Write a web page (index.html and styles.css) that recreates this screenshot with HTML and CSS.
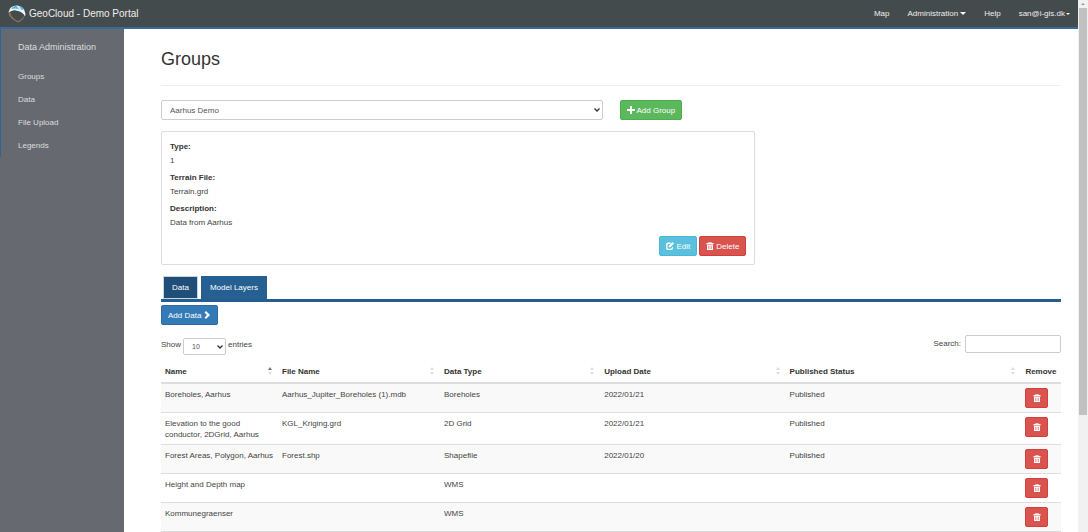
FILE: index.html
```html
<!DOCTYPE html>
<html lang="en">
	<head>
		<meta charset="UTF-8">
		<title>GeoCloud - Demo Portal</title>
		<link rel="stylesheet" href="styles.css">
	</head>
	<body>
		<!-- icons -->
		<svg class="sprite" aria-hidden="true">
			<symbol id="i-trash" viewBox="0 0 16 16"><path fill-rule="evenodd" d="M5 0h6v2h4v3H1V2h4zM6.500 2h3V1.200h-3zM2 6h12v9q0 1-1 1H3q-1 0-1-1zM4.500 7.500v6.500h1V7.500zM7.500 7.500v6.500h1V7.500zM10.500 7.500v6.500h1V7.500z"/></symbol>
			<symbol id="i-plus" viewBox="0 0 16 16"><path d="M6 0h4v6h6v4h-6v6H6v-6H0V6h6z"/></symbol>
			<symbol id="i-right" viewBox="0 0 16 16"><path d="M3 3l3-3 8 8-8 8-3-3 5-5z"/></symbol>
			<symbol id="i-edit" viewBox="0 0 16 16"><path d="M10 1H4Q0 1 0 5v7q0 4 4 4h6q4 0 4-4V9l-3 3q0 1.500-1.500 1.500h-5Q3 13.500 3 12V5.500Q3 4 4.500 4H8zM13 0l3 3-7 7-4 1 1-4z"/></symbol>
		</svg>

		<div class="page">
			<div class="wrap">
				<header class="navbar">
					<a class="brand" href="#">
						<svg class="logo" viewBox="0 0 36 36" aria-hidden="true">
							<path d="M1 13Q0 26 20 35q9-3 13-12l-3-1q-3 6-10 10Q6 25 4 13z" fill="#86705f"/>
							<path d="M1 15Q3 1 18 1q15 1 17 17l-1 5q-4-9-14-11Q10 9 1 15z" fill="#eef3f5"/>
							<path d="M9 4q5-3 10-3 9 1 13 8l-7 1Q18 5 7 8z" fill="#56b3e0"/>
							<path d="M17 2l5 0 6 9-5-1z" fill="#d3ecf7"/>
							<path d="M5 14q7-5 15-1 9 3 12 9-5 7-12 10Q7 25 5 14z" fill="#444b4d"/>
						</svg>
						GeoCloud - Demo Portal
					</a>
					<nav class="menu">
						<a href="#">Map</a>
						<a href="#">Administration <i class="caret"></i></a>
						<a href="#">Help</a>
						<a class="user" href="#">san@i-gis.dk<i class="caret small"></i></a>
					</nav>
				</header>

				<div class="body">
					<aside class="sidebar">
						<nav class="side-nav">
							<h2>Data Administration</h2>
							<a href="#">Groups</a>
							<a href="#">Data</a>
							<a href="#">File Upload</a>
							<a href="#">Legends</a>
						</nav>
					</aside>

					<main class="content">
						<h1>Groups</h1>
						<div class="row">
							<select class="form-control group-select" aria-label="Group">
								<option>Aarhus Demo</option>
							</select>
							<div><button type="button" class="btn btn-success"><svg class="icon"><use href="#i-plus"/></svg>Add Group</button></div>
							<section class="well">
								<dl>
									<dt>Type:</dt>
									<dd>1</dd>
									<dt>Terrain File:</dt>
									<dd>Terrain.grd</dd>
									<dt>Description:</dt>
									<dd>Data from Aarhus</dd>
								</dl>
								<div class="actions">
									<button type="button" class="btn btn-info"><svg class="icon"><use href="#i-edit"/></svg>Edit</button>
									<button type="button" class="btn btn-danger"><svg class="icon"><use href="#i-trash"/></svg>Delete</button>
								</div>
							</section>
						</div>

						<div class="tabs" role="tablist">
							<button type="button" class="tab active" role="tab" aria-selected="true">Data</button>
							<button type="button" class="tab" role="tab" aria-selected="false">Model Layers</button>
						</div>
						<button type="button" class="btn btn-primary">Add Data<svg class="icon"><use href="#i-right"/></svg></button>

						<div class="filter">
							<label>Show
								<select class="form-control length"><option>10</option></select>
								entries</label>
							<label class="search">Search: <input type="search" class="form-control"></label>
						</div>

						<table class="table">
							<thead>
								<tr>
									<th class="c-name sort asc">Name</th>
									<th class="c-file sort">File Name</th>
									<th class="c-type sort">Data Type</th>
									<th class="c-date sort">Upload Date</th>
									<th class="c-status sort">Published Status</th>
									<th>Remove</th>
								</tr>
							</thead>
							<tbody>
								<tr>
									<td>Boreholes, Aarhus</td><td>Aarhus_Jupiter_Boreholes (1).mdb</td><td>Boreholes</td><td>2022/01/21</td><td>Published</td>
									<td class="remove"><button type="button" class="btn btn-danger" aria-label="Remove"><svg class="icon"><use href="#i-trash"/></svg></button></td>
								</tr>
								<tr>
									<td>Elevation to the good conductor, 2DGrid, Aarhus</td><td>KGL_Kriging.grd</td><td>2D Grid</td><td>2022/01/21</td><td>Published</td>
									<td class="remove"><button type="button" class="btn btn-danger" aria-label="Remove"><svg class="icon"><use href="#i-trash"/></svg></button></td>
								</tr>
								<tr>
									<td>Forest Areas, Polygon, Aarhus</td><td>Forest.shp</td><td>Shapefile</td><td>2022/01/20</td><td>Published</td>
									<td class="remove"><button type="button" class="btn btn-danger" aria-label="Remove"><svg class="icon"><use href="#i-trash"/></svg></button></td>
								</tr>
								<tr>
									<td>Height and Depth map</td><td></td><td>WMS</td><td></td><td></td>
									<td class="remove"><button type="button" class="btn btn-danger" aria-label="Remove"><svg class="icon"><use href="#i-trash"/></svg></button></td>
								</tr>
								<tr>
									<td>Kommunegraenser</td><td></td><td>WMS</td><td></td><td></td>
									<td class="remove"><button type="button" class="btn btn-danger" aria-label="Remove"><svg class="icon"><use href="#i-trash"/></svg></button></td>
								</tr>
							</tbody>
						</table>
					</main>
				</div>
			</div>
			<div class="scrollbar" aria-hidden="true">
				<span class="arrow"></span>
				<span class="thumb"></span>
			</div>
		</div>
	</body>
</html>
```

FILE: styles.css
```css
*{box-sizing: border-box;}
body,h1,h2,dl,dd{margin: 0;}
body{font: 8px/11px "Liberation Sans",Arial,sans-serif;color: #444;background: #fff;}
a{color: inherit;text-decoration: none;}
button,input,select{font: inherit;color: inherit;}
.sprite{display: none;}

.page{display: flex;height: 100vh;overflow: hidden;}
.wrap{flex: 1;min-width: 0;display: flex;flex-direction: column;}

/* top bar */
.navbar{flex: none;display: flex;align-items: center;justify-content: space-between;height: 29px;padding: 0 8px;background: #444b4d;border-bottom: 2px solid #366b9c;color: #eee;}
.brand{display: flex;align-items: center;gap: 3px;font-size: 10px;}
.logo{width: 18px;height: 18px;}
.menu{display: flex;gap: 18px;}
.menu a{display: flex;align-items: center;gap: 2px;}
.menu .user{gap: 1px;}
.caret{border: 3px solid transparent;border-top-color: #fff;border-bottom: 0;}
.caret.small{border-width: 2px;border-bottom: 0;}

/* left menu */
.body{flex: 1;min-height: 0;display: flex;}
.sidebar{flex: none;width: 124px;background: #666a70;color: #ddd;}
.side-nav{display: flex;flex-direction: column;padding: 12px 0 0 17px;border-left: 1px solid #2b6597;}
.side-nav h2{font-size: 9px;font-weight: normal;line-height: 12px;margin-bottom: 12px;}
.side-nav a{line-height: 23px;}

.content{flex: 1;min-width: 0;padding: 0 17px 0 37px;}
h1{padding: 20px 0 15px;border-bottom: 1px solid #eee;font-size: 18px;font-weight: normal;line-height: 21px;color: #333;}
.row{display: grid;grid-template-columns: repeat(12,1fr);gap: 11px 17px;margin-top: 14px;}
.group-select{grid-column: span 6;}
.row > div{grid-column: span 6;}
.form-control{height: 20px;padding: 0 8px;border: 1px solid #ccc;border-radius: 2px;background: #fff;color: #555;}
select.form-control{appearance: none;background: #fff url("data:image/svg+xml,%3Csvg xmlns='http://www.w3.org/2000/svg' viewBox='0 0 6 4'%3E%3Cpath d='M.5.5L3 3 5.500.5' fill='none' stroke='%23333' stroke-width='1.3'/%3E%3C/svg%3E") no-repeat right 2px center/6px 4px;}

.btn{display: inline-flex;align-items: center;justify-content: center;gap: 2px;height: 20px;padding: 0 6px;border: 1px solid;border-radius: 2px;color: #fff;vertical-align: top;}
.icon{width: 8px;height: 8px;fill: currentColor;}
.btn-success{background: #5cb85c;border-color: #4cae4c;}
.btn-info{background: #5bc0de;border-color: #46b8da;}
.btn-danger{background: #d9534f;border-color: #d43f3a;}
.btn-primary{background: #337ab7;border-color: #2e6da4;}

.well{grid-column: span 8;padding: 9px 8px 8px;border: 1px solid #ddd;border-radius: 2px;}
.well dt{font-weight: bold;color: #333;line-height: 12px;}
.well dd{line-height: 16px;margin-bottom: 3px;}
.actions{display: flex;justify-content: flex-end;gap: 2px;margin-top: 5px;}

/* tabs */
.tabs{display: flex;gap: 3px;margin: 11px 0 3px;padding-left: 2px;border-bottom: 3px solid #245d90;}
.tab{height: 23px;padding: 0 8px;border: 1px solid #265f91;background: #265f91;color: #fff;}
.tab.active{background: #1f4e79;border-color: #ccd5dd;}

.filter{display: flex;justify-content: space-between;align-items: flex-start;margin-top: 10px;}
.filter label{display: flex;gap: 2px;line-height: 20px;}
.length{width: 43px;height: 17px;margin-top: 3px;font-size: 7px;line-height: 15px;}
.filter .search{gap: 4px;line-height: 18px;}
.search .form-control{width: 96px;height: 18px;}

/* table */
.table{width: 100%;margin-top: 6px;border-collapse: separate;border-spacing: 0;table-layout: fixed;}
.c-name{width: 13%;}
.c-file{width: 18%;}
.c-type{width: 17.8%;}
.c-date{width: 20.6%;}
.c-status{width: 26.2%;}
th{padding: 5px 4px;text-align: left;color: #333;border-bottom: 2px solid #ddd;}
td{padding: 5px 1px 4px 4px;vertical-align: top;border-bottom: 1px solid #ddd;}
tbody tr:nth-child(odd){background: #f9f9f9;}
.remove{padding-top: 4px;}
.remove .btn{width: 23px;}

/* sort arrows */
.sort{position: relative;}
.sort:before,.sort:after{content: "";position: absolute;right: 6px;border: 2px solid transparent;}
.sort:before{top: 6px;border-bottom: 3px solid #ddd;border-top: 0;}
.sort:after{top: 11px;border-top: 3px solid #ddd;border-bottom: 0;}
.sort.asc:before{border-bottom-color: #777;}

/* scroll bar */
.scrollbar{flex: none;width: 10px;display: flex;flex-direction: column;align-items: center;background: #f1f1f1;}
.arrow{margin: 3px 0;border: 2px solid transparent;border-bottom-color: #999;border-top: 0;}
.thumb{width: 8px;height: 76.5%;background: #c1c1c1;}
```
